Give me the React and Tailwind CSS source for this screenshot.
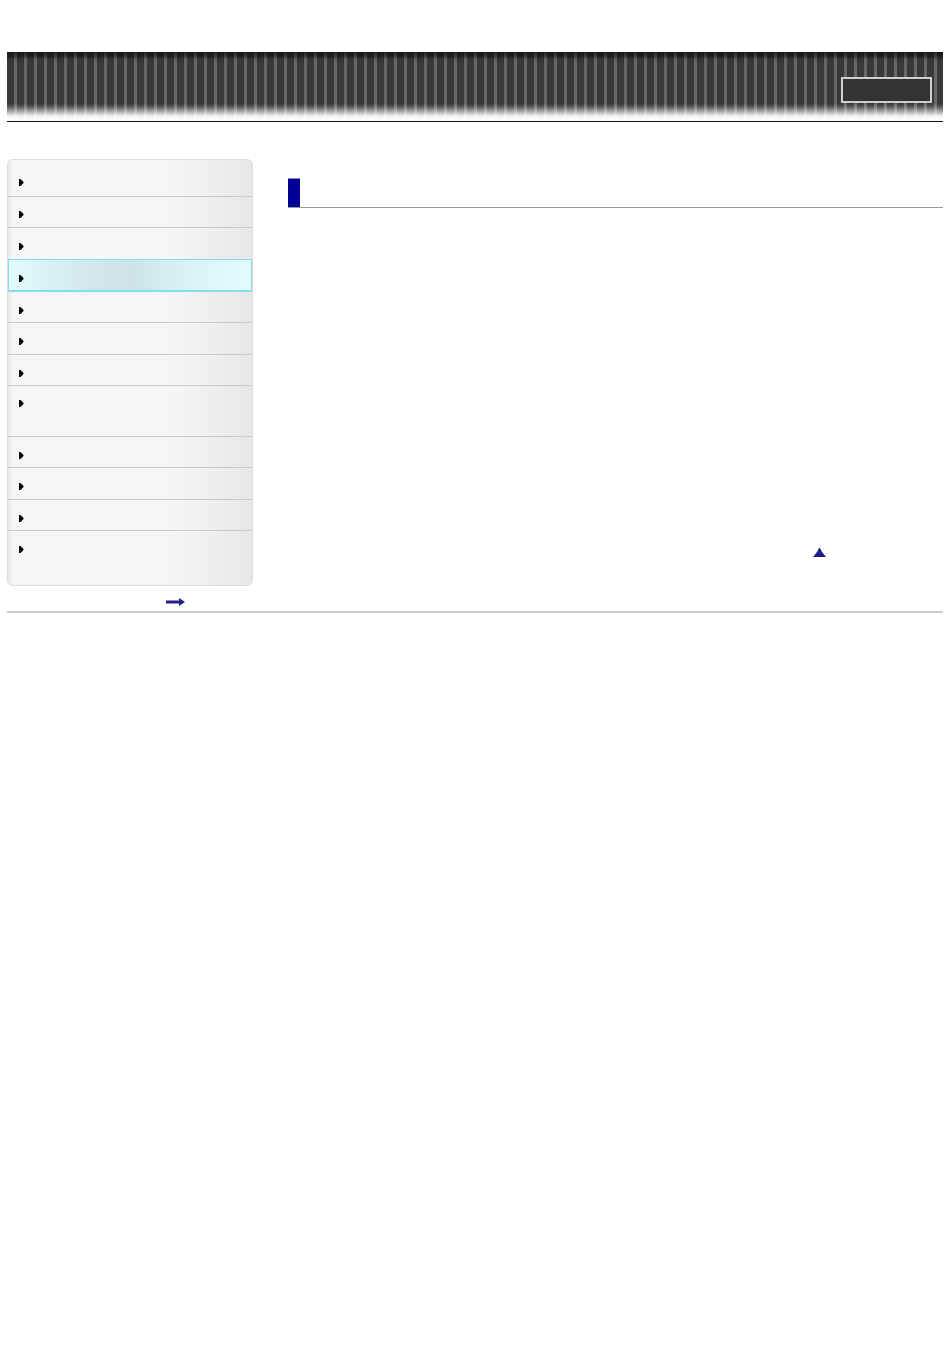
import React from "react";

const rows = [
  { h: 37, pt: 19 },
  { h: 31, pt: 14 },
  { h: 31, pt: 15, nob: true },
  { h: 33, pt: 15, sel: true },
  { h: 31, pt: 15 },
  { h: 32, pt: 15 },
  { h: 31, pt: 15 },
  { h: 51, pt: 14 },
  { h: 31, pt: 15 },
  { h: 32, pt: 15 },
  { h: 31, pt: 15 },
  { h: 54, pt: 15, nob: true },
];

function Tri() {
  return (
    <svg width="5" height="7" viewBox="0 0 5 7" className="block">
      <path d="M0 0 H1.5 L4.5 3 V4 L1.5 7 H0 Z" fill="#000" />
    </svg>
  );
}

export default function App() {
  return (
    <div className="w-[950px] min-h-[1354px] bg-white font-['Liberation_Sans',sans-serif]">
      <div className="h-[52px]" />
      <header className="mx-[7px] h-[70px] border-b border-[#111] flex justify-end items-start pt-[25px] pr-[11px] bg-[linear-gradient(180deg,rgba(0,0,0,0.6)_0px,rgba(0,0,0,0.45)_4px,rgba(0,0,0,0.1)_7px,rgba(0,0,0,0)_10px,rgba(0,0,0,0)_52px,rgba(255,255,255,0.2)_55px,rgba(255,255,255,0.6)_60px,rgba(255,255,255,0.93)_64px,#fff_69px),repeating-linear-gradient(90deg,#393939_0px,#393939_7px,#686868_7px,#686868_10px)]">
        <div className="w-[91px] h-[26px] border-2 border-[#cfcfcf] bg-[#343434]" />
      </header>
      <div className="h-[37px]" />
      <div className="flex mx-[7px]">
        <div className="w-[246px] shrink-0">
          <nav className="rounded-[6px] border border-[#dcdcdc] overflow-hidden bg-[linear-gradient(90deg,#e9e9e9_0px,#f6f6f6_5px,#f6f6f6_65%,#e7e7e7_100%)]">
            {rows.map((r, i) => (
              <div
                key={i}
                style={{ height: r.h, paddingTop: r.pt }}
                className={
                  r.sel
                    ? "border border-b-2 border-[#84dcf0] bg-[linear-gradient(90deg,#e2fbfb_0%,#d3e9ec_30%,#cde3e6_50%,#daf3f5_75%,#e2fcfc_100%)] pl-[10px]"
                    : r.nob
                    ? "pl-[11px]"
                    : "border-b border-[#cacaca] pl-[11px]"
                }
              >
                <Tri />
              </div>
            ))}
          </nav>
          <div className="pl-[159px] pt-[12px] h-[25px]">
            <svg width="20" height="8" viewBox="0 0 20 8" className="block">
              <rect x="0" y="2.5" width="14" height="3" fill="#22228a" />
              <path d="M13 0 L19 4 L13 8 Z" fill="#22228a" />
            </svg>
          </div>
        </div>
        <main className="ml-[35px] flex-1">
          <div className="mt-[19px] border-b border-[#9a9a9a]">
            <div className="w-[12px] h-[29px] bg-[#000099] border-t border-[#8888cc]" />
          </div>
          <div className="mt-[339px] flex justify-end pr-[117px]">
            <svg width="13" height="10" viewBox="0 0 13 10" className="block">
              <path d="M0 10 L4 5 L5 3 L6 1 L7 1 L8 3 L9 5 L13 10 Z" fill="#1d1d8a" />
            </svg>
          </div>
        </main>
      </div>
      <div className="mx-[7px] h-[2px] bg-[#cccccc]" />
    </div>
  );
}
